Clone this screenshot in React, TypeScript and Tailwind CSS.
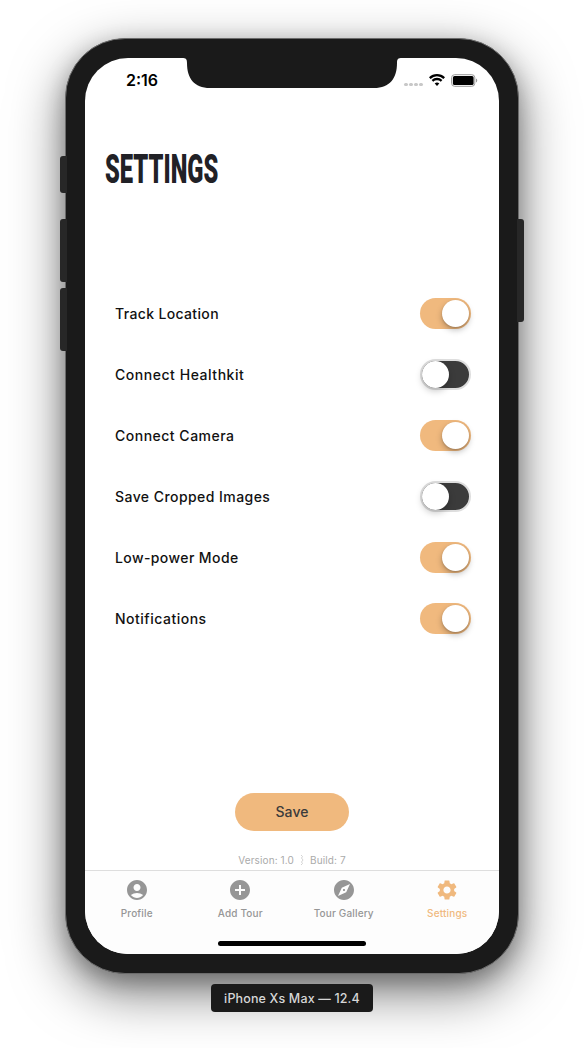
import type { ReactNode } from "react";
import { MdAccountCircle, MdAddCircle, MdExplore, MdSettings } from "react-icons/md";

const settings = [
  { label: "Track Location", on: true, tracking: "tracking-[0.35px]" },
  { label: "Connect Healthkit", on: false, tracking: "tracking-[0.54px]" },
  { label: "Connect Camera", on: true, tracking: "tracking-[0.5px]" },
  { label: "Save Cropped Images", on: false, tracking: "tracking-[0.44px]" },
  { label: "Low-power Mode", on: true, tracking: "tracking-[0.4px]" },
  { label: "Notifications", on: true, tracking: "tracking-[0.5px]" },
];

function Toggle({ on }: { on: boolean }) {
  return on ? (
    <div className="flex h-[31px] w-[51px] items-center justify-end rounded-full bg-[#f0b97e] pr-[2px]">
      <div className="size-[27px] rounded-full bg-white shadow-[0_3px_6px_rgba(0,0,0,0.26),0_1px_2px_rgba(0,0,0,0.15)]" />
    </div>
  ) : (
    <div className="flex h-[31px] w-[51px] items-center rounded-full border-2 border-[#dedede] bg-[#3b3b3b]">
      <div className="size-[27px] rounded-full bg-white shadow-[0_3px_7px_rgba(0,0,0,0.22)]" />
    </div>
  );
}

function Tab({ icon, label, active = false }: { icon: ReactNode; label: string; active?: boolean }) {
  return (
    <div className={`flex flex-1 flex-col items-center pt-[7px] ${active ? "text-[#f0b97e]" : "text-[#969696]"}`}>
      {icon}
      <span className="mt-[4px] text-[10px] leading-[14px] font-medium tracking-[0.16px] whitespace-nowrap">{label}</span>
    </div>
  );
}

function StatusBar() {
  return (
    <div className="flex h-[44px] items-center justify-between pr-[21px] pl-[41px]">
      <span className="text-[16px] font-semibold tracking-[0px] text-black">2:16</span>
      <div className="flex items-center">
        <div className="mt-[9px] flex gap-[1.2px]">
          {[0, 1, 2, 3].map((i) => (
            <i key={i} className="size-[3.8px] rounded-full bg-[#c8c8c8]" />
          ))}
        </div>
        <svg className="ml-[6px] h-[12px] w-[16px]" viewBox="0 0 16 12" fill="none" stroke="#000" strokeWidth="2.3">
          <path d="M.8 4.1C4.9.2 11.1.2 15.2 4.1" />
          <path d="M3.4 6.8c2.6-2.4 6.6-2.4 9.2 0" />
          <path d="M5.7 9.5c1.3-1.2 3.3-1.2 4.6 0L8 11.9Z" fill="#000" stroke="none" />
        </svg>
        <svg className="ml-[6px] h-[13px] w-[27px]" viewBox="0 0 27 13">
          <rect x=".6" y=".7" width="23.2" height="11.6" rx="3" fill="none" stroke="#999" />
          <rect x="1.9" y="2.1" width="20.7" height="8.9" rx="1.6" fill="#000" />
          <path d="M25 4.5v4c1.7-.7 1.7-3.300 0-4Z" fill="#999" />
        </svg>
      </div>
    </div>
  );
}

export default function App() {
  return (
    <div className="flex h-[1048px] w-[584px] flex-col items-center overflow-hidden bg-white pt-[38px] font-['Inter','Liberation_Sans',sans-serif]">
      <div className="relative h-[936px] w-[454px] shrink-0 rounded-[60px] border border-[#6b6b6b] bg-[#1a1a1a] px-[19px] pt-[19px] shadow-[0_18px_54px_rgba(0,0,0,0.52),0_8px_22px_rgba(0,0,0,0.26)]">
        <i className="absolute top-[117px] -left-[6px] h-[37px] w-[7px] rounded-l-[3px] bg-[#272727]" />
        <i className="absolute top-[180px] -left-[6px] h-[63px] w-[7px] rounded-l-[3px] bg-[#272727]" />
        <i className="absolute top-[249px] -left-[6px] h-[63px] w-[7px] rounded-l-[3px] bg-[#272727]" />
        <i className="absolute top-[180px] -right-[6px] h-[103px] w-[7px] rounded-r-[3px] bg-[#272727]" />

        <main className="relative flex h-[896px] w-[414px] flex-col overflow-hidden rounded-[43px] bg-white">
          <svg className="absolute top-0 left-[97px] h-[30px] w-[220px]" viewBox="0 0 220 30">
            <path d="M0 0C4 0 5 1.200 5 5C5 20 12 30 28 30H192C208 30 215 20 215 5C215 1.200 216 0 220 0Z" fill="#1a1a1a" />
          </svg>
          <StatusBar />

          <h1 className="mt-[44px] ml-[20px] h-[47px] origin-left scale-x-[0.593] font-['Roboto'] text-[40px] leading-[48px] font-black text-[#212126]">
            <span className="whitespace-nowrap">SETTINGS</span>
          </h1>

          <div className="mt-[90px] flex flex-col">
            {settings.map((s) => (
              <div key={s.label} className="flex h-[61px] items-center justify-between pr-[28px] pl-[30px]">
                <span className={`text-[14px] leading-[20px] font-medium text-[#111] ${s.tracking}`}>{s.label}</span>
                <Toggle on={s.on} />
              </div>
            ))}
          </div>

          <button className="mx-auto mt-[144px] h-[38px] w-[114px] rounded-full bg-[#f0b97e] pb-[2px] text-[14px] font-medium tracking-[0.1px] text-[#3b3b3b]">
            Save
          </button>
          <p className="mt-[22px] flex h-[14px] justify-center gap-[6px] text-[10px] leading-[14px] tracking-[0.12px] text-[#aaa]">
            <span>Version: 1.0</span>
            <svg className="mt-[2px] h-[10px] w-[4px]" viewBox="0 0 4 10" fill="none" stroke="#c8c8c8" strokeWidth=".8">
              <path d="M1 0L2.500 1.500L1.500 3L3 5L1.500 7L2.500 8.500L1 10" />
            </svg>
            <span>Build: 7</span>
          </p>

          <nav className="mt-auto flex h-[84px] border-t border-[#dedede] bg-[#fdfdfd]">
            <Tab icon={<MdAccountCircle size={24} />} label="Profile" />
            <Tab icon={<MdAddCircle size={24} />} label="Add Tour" />
            <Tab icon={<MdExplore size={24} />} label="Tour Gallery" />
            <Tab icon={<MdSettings size={24} />} label="Settings" active />
          </nav>
          <div className="absolute bottom-[8px] left-[133px] h-[5px] w-[148px] rounded-full bg-black" />
        </main>
      </div>
      <div className="relative mt-[10px] flex h-[28px] w-[162px] shrink-0 items-center justify-center rounded-[4px] bg-[#1a1a1a] pt-[2px] text-[12.500px] font-medium tracking-[0.15px] whitespace-nowrap text-[#d6d6d6]">
        iPhone Xs Max — 12.4
      </div>
    </div>
  );
}
